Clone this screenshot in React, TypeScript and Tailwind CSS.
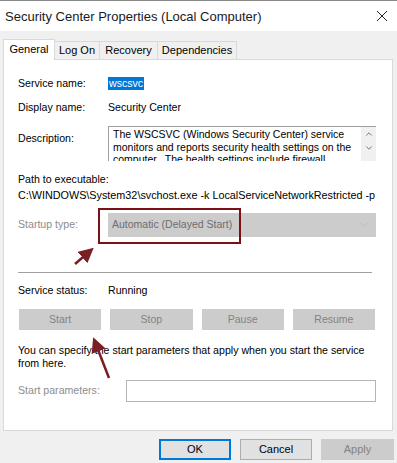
import { ChevronDown, ChevronUp } from 'lucide-react';

const font = { fontFamily: '"Liberation Sans", Arial, sans-serif' };

export default function App() {
  return (
    <div className="w-[397px] h-[463px] overflow-hidden bg-[#f0f0f0] border-t border-[#8a8a8a] text-[10.6px] text-black" style={font}>
      {/* Title bar */}
      <div className="h-[30px] bg-white flex items-center justify-between pl-[5px] pr-[5px]">
        <span className="text-[13px] text-[#1a1a1a] pt-[2px]">Security Center Properties (Local Computer)</span>
        <svg width="12" height="12" viewBox="0 0 12 12" className="mr-[4px]">
          <path d="M1 1 L11 11 M11 1 L1 11" stroke="#222" strokeWidth="1" />
        </svg>
      </div>

      {/* Tabs */}
      <div className="flex items-end pl-[3px] mt-[7px] h-[21px] text-[11px]">
        <div className="relative z-10 h-[21px] w-[52px] bg-white border border-b-0 border-[#d9d9d9] flex items-center justify-center pb-[2px] -mb-px">General</div>
        <div className="h-[18px] w-[45px] bg-[#f0f0f0] border-t border-r border-[#d9d9d9] flex items-center justify-center">Log On</div>
        <div className="h-[18px] w-[58px] bg-[#f0f0f0] border-t border-r border-[#d9d9d9] flex items-center justify-center">Recovery</div>
        <div className="h-[18px] w-[79px] bg-[#f0f0f0] border-t border-r border-[#d9d9d9] flex items-center justify-center">Dependencies</div>
      </div>

      {/* Panel */}
      <div className="relative ml-[3px] w-[390px] h-[372px] bg-white border border-[#d9d9d9] pl-[14px] pr-[16px] flex flex-col">
        <div className="flex items-center h-[15px] mt-[16px]">
          <span className="w-[90px]">Service name:</span>
          <span className="bg-[#0078d7] text-white px-px leading-[13px]">wscsvc</span>
        </div>
        <div className="flex items-center h-[15px] mt-[9px]">
          <span className="w-[90px]">Display name:</span>
          <span>Security Center</span>
        </div>
        <div className="flex h-[35px] mt-[11px]">
          <span className="w-[90px] pt-[5px]">Description:</span>
          <div className="flex-1 flex border-t border-l border-[#a0a0a0] overflow-hidden">
            <div className="flex-1 pl-[4px] pt-[1px] leading-[12.5px] text-[10.5px]">
              The WSCSVC (Windows Security Center) service monitors and reports security health settings on the computer.&nbsp; The health settings include firewall
            </div>
            <div className="w-[15px] bg-[#f0f0f0] flex flex-col items-center pt-[2px] text-[#606060]">
              <ChevronUp size={10} strokeWidth={2} />
              <ChevronDown size={10} strokeWidth={2} className="mt-[4px]" />
            </div>
          </div>
        </div>
        <div className="h-[14px] mt-[11px] leading-[14px]">Path to executable:</div>
        <div className="h-[14px] mt-[2px] leading-[14px] whitespace-nowrap overflow-hidden text-[10.8px]">
          C:\WINDOWS\System32\svchost.exe -k LocalServiceNetworkRestricted -p
        </div>
        <div className="flex items-center h-[24px] mt-[11px]">
          <span className="w-[90px] text-[#8d8d8d]">Startup type:</span>
          <div className="flex-1 h-full bg-[#cccccc] flex items-center justify-between pl-[4px] pr-[6px] text-[#6d6d6d] text-[10.5px]">
            <span>Automatic (Delayed Start)</span>
            <ChevronDown size={12} strokeWidth={1} className="text-[#a8a8a8]" />
          </div>
        </div>
        <div className="h-px bg-[#a0a0a0] mt-[35px] mr-[4px]" />
        <div className="flex items-center h-[14px] mt-[11px]">
          <span className="w-[90px]">Service status:</span>
          <span>Running</span>
        </div>
        <div className="grid grid-cols-4 gap-[9px] h-[21px] mt-[11px] ml-px mr-px text-[10.5px]">
          {['Start', 'Stop', 'Pause', 'Resume'].map(b => (
            <div key={b} className="bg-[#cccccc] flex items-center justify-center text-[#838383]">{b}</div>
          ))}
        </div>
        <div className="mt-[14px] leading-[13px]">
          You can specify the start parameters that apply when you start the service from here.
        </div>
        <div className="flex items-center h-[22px] mt-[10px]">
          <span className="w-[108px] text-[#8d8d8d]">Start parameters:</span>
          <div className="flex-1 h-full border border-[#b5b5b5] bg-white" />
        </div>

        {/* Annotations */}
        <div className="absolute left-[94px] top-[148px] w-[143px] h-[36px] border-2 border-[#7a1117]" />
        <svg className="absolute left-0 top-0 pointer-events-none" width="390" height="372">
          <defs>
            <marker id="ah" markerWidth="6" markerHeight="6" refX="4" refY="3" orient="auto">
              <path d="M0 0 L6 3 L0 6 Z" fill="#7a1f23" />
            </marker>
          </defs>
          <line x1="71" y1="204" x2="86" y2="191" stroke="#7a1f23" strokeWidth="2.5" markerEnd="url(#ah)" />
          <line x1="105" y1="318" x2="91" y2="282" stroke="#7a1f23" strokeWidth="2.5" markerEnd="url(#ah)" />
        </svg>
      </div>

      {/* Bottom buttons */}
      <div className="flex justify-end gap-[9px] mt-[8px] pr-[3px] text-[11px]">
        <div className="w-[72px] h-[21px] bg-[#e1e1e1] border-2 border-[#0078d7] flex items-center justify-center">OK</div>
        <div className="w-[72px] h-[21px] bg-[#e1e1e1] border border-[#adadad] flex items-center justify-center">Cancel</div>
        <div className="w-[73px] h-[21px] bg-[#cccccc] flex items-center justify-center text-[#838383]">Apply</div>
      </div>
    </div>
  );
}
